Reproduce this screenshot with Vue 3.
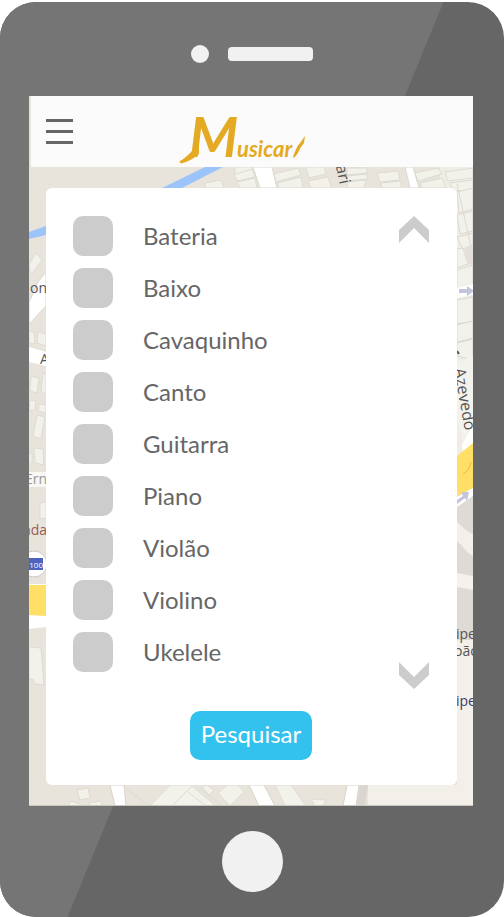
<script setup>
import { ref } from 'vue'

const instruments = [
  'Bateria', 'Baixo', 'Cavaquinho', 'Canto', 'Guitarra',
  'Piano', 'Violão', 'Violino', 'Ukelele',
]
const selected = ref([])
const list = ref(null)

function scroll(step) {
  list.value.scrollBy({ top: step, behavior: 'smooth' })
}
</script>

<template>
  <div class="phone">
    <div class="earpiece">
      <span class="camera"></span>
      <span class="speaker"></span>
    </div>

    <div class="screen">
      <svg class="map" viewBox="29 96 444 710" preserveAspectRatio="xMidYMid slice" aria-hidden="true">
        <rect x="29" y="96" width="444" height="710" fill="#e8e4dc" />
        <!-- right side ground -->
        <path d="M440 160H473V560H440Z" fill="#efede4" />
        <path d="M457 486L473 478V640H457Z" fill="#dedad4" />
        <path d="M457 522C463 527 467 532 473 534V556C467 553 462 545 457 541Z" fill="#f2f0e8" />
        <path d="M457 573L473 576V590L457 587Z" fill="#f4f2ea" />
        <path d="M457 640H473V806H368V785H457Z" fill="#f3f0e9" />
        <!-- river -->
        <path d="M29 232L46 226L162 188L205 167H223L182 188L46 235L29 239Z" fill="#9dc3fb" />
        <!-- blocks along the top -->
        <g fill="#f2f2ea" stroke="#dedbd3" stroke-width="1">
          <path d="M234 174L252 169L255 177L237 181Z" />
          <path d="M235 167H252L253 169L235 174Z" />
          <path d="M237 182L255 178L257 188H240Z" />
          <path d="M205 183L221 180L224 188H205Z" />
          <path d="M274 174L298 168L301 175L276 182Z" />
          <path d="M277 183L301 177L303 188H279Z" />
          <path d="M306 167H324L326 174L309 178Z" />
          <path d="M308 181L328 177L332 188H311Z" />
          <path d="M347 168H367V173L347 175Z" />
          <path d="M347 176L367 174V179L347 181Z" />
          <path d="M347 182L366 180L364 188H348Z" />
          <path d="M377 173L398 171L400 180L380 182Z" />
          <path d="M381 183L401 181V188H382Z" />
          <path d="M415 173L438 168L442 174L418 181Z" />
          <path d="M420 183L442 178L446 188H422Z" />
          <path d="M445 172L473 168V178L448 181Z" />
          <path d="M450 183L473 180V191H457L452 188Z" />
        </g>
        <path d="M253 167H272L277 188H260Z" fill="#fff" stroke="#dcd8d0" />
        <path d="M405 167H413L419 188H410Z" fill="#fff" stroke="#dcd8d0" />
        <!-- right-hand lots -->
        <g fill="#f2f2ea" stroke="#dbd8cf" stroke-width="1">
          <path d="M457 192L473 188V209L459 213Z" />
          <path d="M457 215L473 211V231L460 234Z" />
          <path d="M457 237L473 233V246L463 249Z" />
          <path d="M457 249L463 248L468 264L457 268Z" />
          <path d="M457 270L473 265V286L457 289Z" />
          <path d="M457 300L473 297V321L457 324Z" />
          <path d="M457 325L473 321V338L457 342Z" />
          <path d="M457 343L473 339V360L457 356Z" />
        </g>
        <path d="M457 184L473 256" fill="none" stroke="#dbd8cf" />
        <path d="M464 248L473 244V265L469 264Z" fill="#e4dfd8" />
        <path d="M457 288L473 284V295L457 298Z" fill="#fff" />
        <path d="M459 289H467V286L474 291L467 296V293H459Z" fill="#c2c5dc" />
        <path d="M457 362L473 356V438L466 451L457 420Z" fill="#f3f2ec" />
        <path d="M462 445L473 425V450L464 460Z" fill="#fff" />
        <path d="M457 456L473 443V488L457 496Z" fill="#ffdf66" />
        <path d="M463 474Q470 470 471 462" fill="none" stroke="#e3b849" stroke-width="1" />
        <path d="M457 497L473 488V496L457 507Z" fill="#fff" />
        <path d="M457 500L463 496L461 492L469 492L467 501L465 498L457 504Z" fill="#c2c5dc" />
        <!-- left-hand roads and lots -->
        <path d="M46 272L38 282L29 302V324L46 306Z" fill="#fff" stroke="#dcd8d0" />
        <path d="M29 347L46 352V366L29 362Z" fill="#fff" />
        <path d="M29 472H46V487H29Z" fill="#f8f7f3" />
        <g fill="#f2f2ea" stroke="#dfdbd3" stroke-width="1">
          <path d="M29 265L36 253L42 260L31 275Z" />
          <path d="M29 331L34 332L35 344L29 343Z" />
          <path d="M38 332L46 334V346L37 343Z" />
          <path d="M31 376L39 378L37 393L30 391Z" />
          <path d="M43 374L46 373V394L41 391Z" />
          <path d="M30 400L36 401L35 410H29Z" />
          <path d="M39 404L46 405V413L38 411Z" />
          <path d="M37 415L45 417L41 439L33 436Z" />
          <path d="M34 448L43 449L44 465L35 463Z" />
          <path d="M29 453L32 453V464H29Z" />
          <path d="M40 503L46 502V519L40 518Z" />
          <path d="M29 647L41 648L44 685L35 684L33 679H29Z" />
        </g>
        <path d="M29 584H46V627L29 629Z" fill="#fff" />
        <path d="M29 585H46V616L29 615Z" fill="#ffdf66" />
        <circle cx="34" cy="564" r="13" fill="#fff" stroke="#cbc9c7" />
        <rect x="29" y="558" width="14" height="12" fill="#4f62bd" />
        <!-- blocks along the bottom -->
        <g fill="#f2f2ea" stroke="#dedbd3" stroke-width="1">
          <path d="M77 790L88 788L90 798L80 800Z" />
          <path d="M68 806L71 801L80 804V806Z" />
          <path d="M88 806L89 803L101 801L102 806Z" />
          <path d="M170 785H196L174 806H150Z" />
          <path d="M192 786L216 806H172Z" />
          <path d="M200 788L222 806M188 792L206 806" />
          <path d="M202 787L207 785L214 790L209 795Z" />
          <path d="M218 793L227 785H238L244 792L230 806Z" />
          <path d="M275 785H291L306 806H285Z" />
          <path d="M311 799L326 800L323 806H315Z" />
          <path d="M126 789L150 806" />
        </g>
        <path d="M110 785H124L126 806H115Z" fill="#fff" stroke="#d8d3c9" />
        <path d="M249 785H264L275 806H259Z" fill="#fff" stroke="#d8d3c9" />
        <path d="M347 785H359L356 806H343Z" fill="#fff" stroke="#d8d3c9" />
        <path d="M360 785H368L365 806H357Z" fill="#dad6cf" />
        <!-- place names -->
        <g class="map-label">
          <text x="30" y="293">on</text>
          <text x="40" y="364">A</text>
          <text class="faint" x="47" y="484" text-anchor="end">Ern</text>
          <text class="red" x="47" y="535" text-anchor="end">ada</text>
          <text class="small" x="43" y="568" text-anchor="end">100</text>
          <text class="street" transform="translate(335 162) rotate(78)">lari</text>
          <text class="street" transform="translate(454 369) rotate(80)">Azevedo</text>
          <text x="456" y="639">ipe</text>
          <text x="454" y="656">oão</text>
          <text class="blue" x="456" y="706">ipe</text>
        </g>
        <path d="M457 351L459 354" stroke="#555" stroke-width="2" fill="none" />
        <path d="M29 805.5H473" stroke="#c9c6c0" fill="none" />
      </svg>

      <header class="topbar">
        <button class="menu" type="button" aria-label="Menu">
          <span></span><span></span><span></span>
        </button>
        <svg class="logo" viewBox="0 0 128 60" role="img" aria-label="Musicar">
          <text class="initial" x="10" y="52">M</text>
          <text class="rest" x="58" y="52">usicar</text>
          <path d="M1 56C8 52 14 46 20 36L20 49C14 54 10 56 4 58C1 59 0 57 1 56Z" />
          <path d="M114 52C116 46 118 41 121 38L126 31L125 38L122 42C120 46 118 50 115 53Z" />
        </svg>
      </header>

      <form class="card" @submit.prevent>
        <div class="picker">
          <ul ref="list" class="options">
            <li v-for="name in instruments" :key="name">
              <label class="option">
                <input v-model="selected" type="checkbox" name="instrument" :value="name" />
                <span>{{ name }}</span>
              </label>
            </li>
          </ul>
          <div class="arrows">
            <button type="button" aria-label="Subir" @click="scroll(-52)">
              <svg viewBox="0 0 30 27"><path d="M0 14L15 0L30 14V27L15 12L0 27Z" /></svg>
            </button>
            <button type="button" aria-label="Descer" @click="scroll(52)">
              <svg viewBox="0 0 30 27"><path d="M0 13L15 27L30 13V0L15 15L0 0Z" /></svg>
            </button>
          </div>
        </div>
        <button class="search" type="submit">Pesquisar</button>
      </form>
    </div>

    <div class="chin">
      <button class="home" type="button" aria-label="Início"></button>
    </div>
  </div>
</template>

<style>
body {
  margin: 0;
  background: #fff;
}
</style>

<style scoped>
.phone {
  position: relative;
  margin-top: 2px;
  border-radius: 36px;
  overflow: hidden;
  background: #666;
  font-family: Lato, "Open Sans", sans-serif;
  color: #666;
}
.phone::before {
  content: "";
  position: absolute;
  inset: 0;
  background: #757575;
  clip-path: polygon(0 0, 88% 0, 13.4% 100%, 0 100%);
}
button {
  margin: 0;
  padding: 0;
  border: 0;
  background: none;
  font: inherit;
  cursor: pointer;
}
.earpiece {
  position: relative;
  display: flex;
  align-items: center;
  justify-content: center;
  gap: 19px;
  height: 84px;
  padding-top: 10px;
}
.camera {
  width: 18px;
  height: 18px;
  border-radius: 50%;
  background: #f1f1f1;
}
.speaker {
  width: 85px;
  height: 14px;
  border-radius: 4px;
  background: #f1f1f1;
}
.screen {
  position: relative;
  margin: 0 31px 0 29px;
  padding-bottom: 21px;
  overflow: hidden;
}
.map {
  position: absolute;
  inset: 0;
  width: 100%;
  height: 100%;
}
.map-label {
  font-family: "Open Sans", "Noto Sans", sans-serif;
  font-size: 14px;
  fill: #555;
}
.map-label .street {
  font-size: 16px;
}
.map-label .faint {
  fill: #999;
}
.map-label .red {
  fill: #9a5a50;
}
.map-label .blue {
  fill: #39396f;
}
.map-label .small {
  font-size: 8px;
  fill: #fff;
}
.topbar {
  position: relative;
  display: grid;
  grid-template-columns: 1fr auto 1fr;
  align-items: center;
  height: 71px;
  margin-left: 2px;
  padding: 0 15px;
  background: #fbfbfb;
}
.menu {
  display: flex;
  flex-direction: column;
  gap: 8px;
  width: 27px;
}
.menu span {
  height: 3px;
  background: #666;
}
.logo {
  width: 128px;
  height: 60px;
  margin-right: 18px;
  margin-top: 6px;
  fill: #e5aa23;
}
.initial {
  font: italic 700 56px Lato, sans-serif;
}
.rest {
  font: italic 700 22px Lato, sans-serif;
}
.card {
  position: relative;
  display: flex;
  flex-direction: column;
  align-items: center;
  gap: 22px;
  margin: 21px 16px 0 17px;
  padding: 28px 28px 25px 27px;
  border-radius: 6px;
  background: #fff;
}
.picker {
  display: flex;
  align-self: stretch;
  justify-content: space-between;
}
.options {
  display: flex;
  flex: 1;
  flex-direction: column;
  gap: 12px;
  margin: 0;
  padding: 0 0 17px;
  list-style: none;
}
.option {
  display: flex;
  align-items: center;
  gap: 30px;
  font-size: 24px;
  line-height: 40px;
}
.option input {
  appearance: none;
  width: 40px;
  height: 40px;
  margin: 0;
  border-radius: 10px;
  background: #ccc;
}
.option input:checked {
  background: #33c1ed;
}
.arrows {
  display: flex;
  flex-direction: column;
  justify-content: space-between;
}
.arrows svg {
  display: block;
  width: 30px;
  height: 27px;
  fill: #ccc;
}
.search {
  height: 49px;
  padding: 0 11px 5px;
  border-radius: 10px;
  background: #33c1ed;
  color: #fff;
  font-size: 24px;
}
.chin {
  position: relative;
  display: flex;
  align-items: center;
  justify-content: center;
  height: 111px;
}
.home {
  width: 61px;
  height: 61px;
  border-radius: 50%;
  background: #f1f1f1;
}
</style>
